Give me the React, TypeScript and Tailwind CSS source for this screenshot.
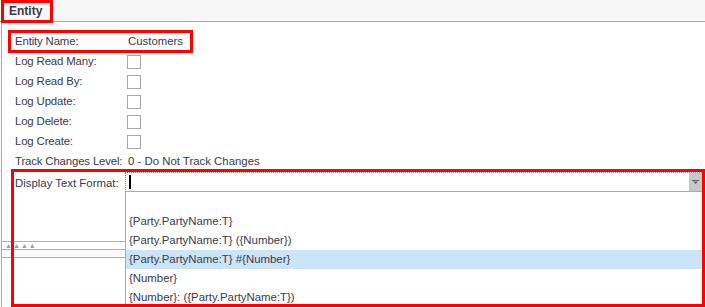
import React from "react";

const rows: { label: string; value?: string; check?: boolean }[] = [
  { label: "Entity Name:", value: "Customers" },
  { label: "Log Read Many:", check: true },
  { label: "Log Read By:", check: true },
  { label: "Log Update:", check: true },
  { label: "Log Delete:", check: true },
  { label: "Log Create:", check: true },
  { label: "Track Changes Level:", value: "0 - Do Not Track Changes" },
];

const items = [
  "",
  "{Party.PartyName:T}",
  "{Party.PartyName:T} ({Number})",
  "{Party.PartyName:T} #{Number}",
  "{Number}",
  "{Number}: ({Party.PartyName:T})",
];

const Row = ({ label, value, check }: { label: string; value?: string; check?: boolean }) => (
  <div className="flex h-[20px] items-center whitespace-nowrap">
    <div className="w-[125px] pl-[13px] shrink-0 tracking-[-0.15px]">{label}</div>
    {check ? (
      <div className="w-[14px] h-[14px] border border-[#a8a8a8] bg-white" />
    ) : (
      <div className="pl-[1px]">{value}</div>
    )}
  </div>
);

export default function App() {
  return (
    <div
      className="relative w-[705px] h-[307px] overflow-hidden bg-white text-[11.4px] text-[#3a3a4c]"
      style={{ fontFamily: '"Liberation Sans", Arial, sans-serif' }}
    >
      <div className="h-[22px] bg-[#f7f7f7] border-b border-[#a8a8a8] pl-[9px] pt-[4px] font-bold leading-[14px] text-[12px]">
        Entity
      </div>
      <div className="ml-[1px] border-l border-[#a8a8a8] h-[285px] flex flex-col">
        <div className="pt-[10px]">
          {rows.map((r) => (
            <Row key={r.label} {...r} />
          ))}
        </div>
        <div className="flex h-[20px] whitespace-nowrap">
          <div className="w-[123px] pl-[13px] pt-[3px] shrink-0">Display Text Format:</div>
          <div className="flex-1 flex mr-[3px] border-t border-l border-dotted border-[#8a8a8a] border-b-0">
            <div className="flex-1 border-b border-[#aaaaaa] pl-[3px] pt-[2px]">
              <div className="w-[2px] h-[14px] bg-black" />
            </div>
            <div className="w-[13px] bg-[#c8c8c8] border-b border-[#aaaaaa] flex items-center justify-center">
              <svg width="7" height="4" viewBox="0 0 7 4">
                <rect x="0" y="0" width="7" height="1" fill="#666" />
                <path d="M1 1.5h5L3.5 4z" fill="#666" />
              </svg>
            </div>
          </div>
        </div>
        <div className="flex flex-1">
          <div className="w-[123px] shrink-0 flex flex-col pt-[49px]">
            <div className="h-[8px] border-t border-[#b0b0b0] flex items-center gap-[1px] pl-[3px] text-[7px] text-[#a0a0a0] leading-none">
              <span>▲</span>
              <span>▲</span>
              <span>▲</span>
              <span>▲</span>
            </div>
            <div className="h-[9px] border-t border-b border-[#b0b0b0] bg-[#fafafa]" />
          </div>
          <div className="flex-1 mr-[3px] border-l border-[#a8a8a8] bg-white whitespace-nowrap pt-[1px]">
            {items.map((t, i) => (
              <div
                key={i}
                className={`h-[19px] pl-[3px] flex items-center ${i === 3 ? "bg-[#cce4f7]" : ""}`}
              >
                {t}
              </div>
            ))}
          </div>
        </div>
      </div>

      <div className="absolute left-[1px] top-0 w-[52px] h-[23px] border-[3px] border-[#ff0000]" />
      <div className="absolute left-[8px] top-[30px] w-[185px] h-[23px] border-[3px] border-[#ff0000]" />
      <div className="absolute left-[11px] top-[169px] w-[694px] h-[138px] border-[3px] border-[#ff0000]" />
    </div>
  );
}
